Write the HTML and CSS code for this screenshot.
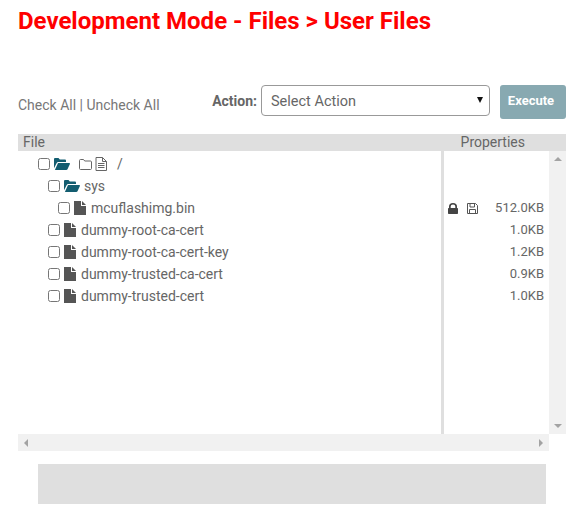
FILE: index.html
```html
<!DOCTYPE html>
<html lang="en">
<head>
    <meta charset="UTF-8">
    <title>Development Mode - Files</title>
    <link rel="stylesheet" href="styles.css">
</head>
<body>

    <svg class="icon-defs" width="0" height="0">
        <symbol id="i-folder-open" viewBox="0 0 16 12">
            <path d="M0 1.2C0 .5.5 0 1.2 0h3.3l1.3 1.4h5c.7 0 1.2.5 1.2 1.2V4H4.2c-.7 0-1.2.3-1.5.9L0 10.2z"/>
            <path d="M4 5h11.3c.5 0 .8.5.6 1l-2.4 5.2c-.2.5-.7.8-1.2.8H.9z"/>
        </symbol>
        <symbol id="i-folder" viewBox="0 0 13 11">
            <path d="M1.5.5h3l1.2 1.5h5.8c.6 0 1 .4 1 1v6.5c0 .6-.4 1-1 1h-10c-.6 0-1-.4-1-1V1.5c0-.6.4-1 1-1z" fill="none" stroke="currentColor"/>
        </symbol>
        <symbol id="i-file-text" viewBox="0 0 12 14">
            <path d="M1 .5h6.5l4 4v9H1zM7.500.5v4h4M3 6.500h6.500M3 8.500h6.500M3 10.500h6.500" fill="none" stroke="currentColor"/>
        </symbol>
        <symbol id="i-file" viewBox="0 0 12 14">
            <path d="M0 0h7v5h5v9H0zM8 0l4 4H8z"/>
        </symbol>
        <symbol id="i-lock" viewBox="0 0 10 11">
            <path d="M1 5V3.500a4 3.500 0 0 1 8 0V5h.3c.4 0 .7.3.7.7v4.600c0 .4-.3.7-.7.7H.7c-.4 0-.7-.3-.7-.7V5.700c0-.4.3-.7.700-.7zM2.700 5h4.600V3.500a2.300 2 0 0 0-4.600 0z"/>
        </symbol>
        <symbol id="i-save" viewBox="0 0 11 11">
            <path d="M.5.5h8l2 2v8H.5zM3 .5v3.500h4.500V.5M2.500 10.500V6.500h6v4" fill="none" stroke="currentColor"/>
        </symbol>
    </svg>

    <h1 class="page-title">Development Mode - Files &gt; User Files</h1>

    <div class="toolbar">
        <div class="check-links">Check All | Uncheck All</div>
        <div class="action-group">
            <label class="action-label" for="action">Action:</label>
            <div class="select-wrap">
                <select id="action" class="action-select">
                    <option>Select Action</option>
                </select>
            </div>
            <button class="execute-btn" type="button">Execute</button>
        </div>
    </div>

    <div class="browser">
        <div class="browser-head">
            <span>File</span>
            <span class="head-props">Properties</span>
        </div>

        <div class="browser-body">
            <ul class="tree">
                <li class="row depth-1">
                    <input type="checkbox">
                    <svg class="ico-open"><use href="#i-folder-open"/></svg>
                    <svg class="ico-folder"><use href="#i-folder"/></svg>
                    <svg class="ico-text"><use href="#i-file-text"/></svg>
                    <span class="root-name">/</span>
                </li>
                <li class="row depth-2">
                    <input type="checkbox">
                    <svg class="ico-open"><use href="#i-folder-open"/></svg>
                    <span class="name-dir">sys</span>
                </li>
                <li class="row depth-3">
                    <input type="checkbox">
                    <svg class="ico-file"><use href="#i-file"/></svg>
                    <span>mcuflashimg.bin</span>
                </li>
                <li class="row depth-2">
                    <input type="checkbox">
                    <svg class="ico-file"><use href="#i-file"/></svg>
                    <span>dummy-root-ca-cert</span>
                </li>
                <li class="row depth-2">
                    <input type="checkbox">
                    <svg class="ico-file"><use href="#i-file"/></svg>
                    <span>dummy-root-ca-cert-key</span>
                </li>
                <li class="row depth-2">
                    <input type="checkbox">
                    <svg class="ico-file"><use href="#i-file"/></svg>
                    <span>dummy-trusted-ca-cert</span>
                </li>
                <li class="row depth-2">
                    <input type="checkbox">
                    <svg class="ico-file"><use href="#i-file"/></svg>
                    <span>dummy-trusted-cert</span>
                </li>
            </ul>

            <ul class="props">
                <li class="row"></li>
                <li class="row"></li>
                <li class="row">
                    <svg class="ico-lock"><use href="#i-lock"/></svg>
                    <svg class="ico-save"><use href="#i-save"/></svg>
                    <span class="size">512.0KB</span>
                </li>
                <li class="row"><span class="size">1.0KB</span></li>
                <li class="row"><span class="size">1.2KB</span></li>
                <li class="row"><span class="size">0.9KB</span></li>
                <li class="row"><span class="size">1.0KB</span></li>
            </ul>

            <div class="vscroll">
                <span class="arrow arrow-up"></span>
                <span class="arrow arrow-down"></span>
            </div>
        </div>

        <div class="hscroll">
            <span class="arrow arrow-left"></span>
            <span class="arrow arrow-right"></span>
        </div>
    </div>

    <div class="status-box"></div>

</body>
</html>
```

FILE: styles.css
```css
/* Global Styles */
body {
    font-family: 'Roboto', sans-serif;
    margin: 0;
    padding: 0 21px 15px 18px;
    background-color: #fff;
    color: #666;
    font-size: 14px;
}

ul {
    list-style: none;
    margin: 0;
    padding: 0;
}

.icon-defs {
    position: absolute;
}

svg {
    fill: currentColor;
    flex: none;
}

/* Title */
.page-title {
    margin: 0;
    padding-top: 8px;
    height: 76px;
    box-sizing: border-box;
    font-size: 24px;
    line-height: 27px;
    font-weight: 700;
    color: #f00;
}

/* Toolbar */
.toolbar {
    display: flex;
    justify-content: space-between;
    align-items: flex-start;
    height: 49px;
    margin-top: 9px;
}

.check-links {
    margin-top: 11px;
    line-height: 18px;
    color: #777;
}

.action-group {
    display: flex;
    align-items: flex-start;
}

.action-label {
    margin: 7px 4px 0 0;
    font-size: 14px;
    line-height: 18px;
    font-weight: 700;
}

.select-wrap {
    position: relative;
    margin-right: 10px;
}

.select-wrap::after {
    content: "";
    position: absolute;
    right: 7px;
    top: 12px;
    border-left: 3.5px solid transparent;
    border-right: 3.5px solid transparent;
    border-top: 6px solid #111;
}

.action-select {
    display: block;
    width: 229px;
    height: 31px;
    padding: 1px 9px 0;
    appearance: none;
    background: #fff;
    border: 1px solid #999;
    border-radius: 4px;
    font-family: inherit;
    font-size: 14.5px;
    color: #666;
}

.execute-btn {
    width: 66px;
    height: 34px;
    padding: 0 4px 4px 0;
    border: none;
    border-radius: 3px;
    background-color: #88a9b1;
    color: #fff;
    font-family: inherit;
    font-size: 13px;
    font-weight: 700;
}

/* File browser */
.browser-head {
    display: flex;
    justify-content: space-between;
    height: 17px;
    padding: 0 41px 0 5px;
    background-color: #dfdfdf;
    line-height: 16px;
    font-size: 14px;
    color: #666;
}

.browser-body {
    display: flex;
    height: 283px;
}

.tree {
    flex: 1;
    padding-top: 2px;
    border-right: 3px solid #dfdfdf;
}

.props {
    width: 105px;
    padding-top: 2px;
}

.row {
    display: flex;
    align-items: center;
    height: 22px;
    line-height: 22px;
    white-space: nowrap;
}

.row input {
    width: 12px;
    height: 12px;
    margin: 0 0 1px -1px;
    flex: none;
}

.depth-1 { padding-left: 21px; }
.depth-2 { padding-left: 31px; }
.depth-3 { padding-left: 41px; }

.ico-open {
    width: 16px;
    height: 12px;
    margin-left: 4px;
    color: #135d70;
}

.ico-folder {
    width: 13px;
    height: 11px;
    margin-left: 9px;
    color: #666;
}

.ico-text {
    width: 12px;
    height: 14px;
    margin-left: 3px;
    color: #666;
}

.root-name {
    margin-left: 10px;
}

.name-dir {
    margin-left: 4px;
}

.ico-file {
    width: 12px;
    height: 14px;
    margin: 0 5px 0 4px;
    color: #555;
}

.ico-lock {
    width: 10px;
    height: 11px;
    margin-left: 4px;
    color: #444;
}

.ico-save {
    width: 11px;
    height: 11px;
    margin-left: 9px;
    color: #555;
}

.size {
    margin-left: auto;
    padding-right: 5px;
    font-size: 13px;
}

/* Scrollbars */
.vscroll,
.hscroll {
    display: flex;
    justify-content: space-between;
    align-items: center;
    background-color: #f1f1f1;
}

.vscroll {
    width: 17px;
    flex-direction: column;
    padding: 6px 0;
    box-sizing: border-box;
}

.hscroll {
    height: 17px;
    margin-right: 17px;
    padding: 0 6px;
}

.arrow {
    width: 0;
    height: 0;
    border: 4px solid transparent;
}

.arrow-up {
    border-top: none;
    border-bottom-color: #a3a3a3;
}

.arrow-down {
    border-bottom: none;
    border-top-color: #a3a3a3;
}

.arrow-left {
    border-left: none;
    border-right-color: #a3a3a3;
}

.arrow-right {
    border-right: none;
    border-left-color: #a3a3a3;
}

/* Empty status area under the browser */
.status-box {
    height: 40px;
    margin: 13px 20px 0;
    background-color: #dfdfdf;
}
```
